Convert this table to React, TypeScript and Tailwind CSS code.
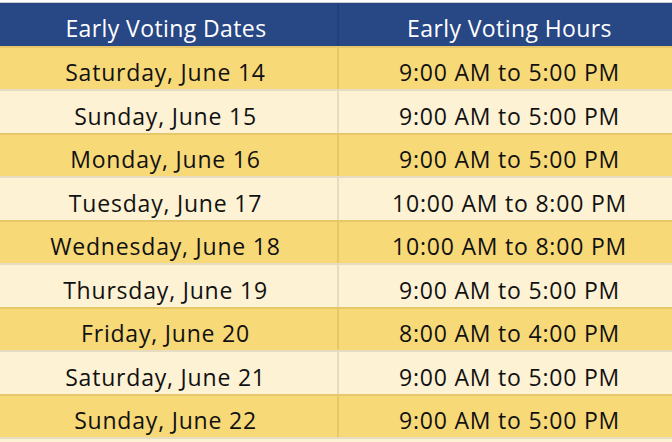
import React from "react";

const rows: [string, string][] = [
  ["Saturday, June 14", "9:00 AM to 5:00 PM"],
  ["Sunday, June 15", "9:00 AM to 5:00 PM"],
  ["Monday, June 16", "9:00 AM to 5:00 PM"],
  ["Tuesday, June 17", "10:00 AM to 8:00 PM"],
  ["Wednesday, June 18", "10:00 AM to 8:00 PM"],
  ["Thursday, June 19", "9:00 AM to 5:00 PM"],
  ["Friday, June 20", "8:00 AM to 4:00 PM"],
  ["Saturday, June 21", "9:00 AM to 5:00 PM"],
  ["Sunday, June 22", "9:00 AM to 5:00 PM"],
];

export default function App() {
  return (
    <div
      className="w-[672px] h-[442px] overflow-hidden bg-white flex flex-col"
      style={{ fontFamily: "'Open Sans', sans-serif" }}
    >
      <div className="h-[2px] bg-white shrink-0" />
      <div className="h-[1px] bg-[#c9ccd3] shrink-0" />
      <div className="h-[43px] shrink-0 bg-[#284785] flex text-white text-[23px] tracking-[0.4px]">
        <div className="w-[337px] flex items-center justify-center pt-[8px] pr-[5px]">Early Voting Dates</div>
        <div className="w-[2px] bg-[#243f78]" />
        <div className="flex-1 flex items-center justify-center pt-[8px] pl-[8px]">Early Voting Hours</div>
      </div>
      {rows.map(([d, h], i) => {
        const yellow = i % 2 === 0;
        return (
          <div
            key={i}
            className={
              yellow
                ? "h-[43.45px] shrink-0 flex border-t-2 border-[#e6c76a] bg-[#f8d978] text-[#111] text-[23px] tracking-[0.8px]"
                : "h-[43.45px] shrink-0 flex border-t-2 border-[#e5dcc2] bg-[#fdf2d4] text-[#111] text-[23px] tracking-[0.8px]"
            }
          >
            <div className="w-[337px] flex items-center justify-center pt-[8px] pr-[6px]">{d}</div>
            <div className={yellow ? "w-[2px] bg-[#e6c76a]" : "w-[2px] bg-[#e5dcc2]"} />
            <div className="flex-1 flex items-center justify-center pt-[8px] pl-[8px]">{h}</div>
          </div>
        );
      })}
      <div className="h-[2px] shrink-0 bg-[#e5dcc2]" />
      <div className="flex-1 bg-[#fdf2d4]" />
    </div>
  );
}
